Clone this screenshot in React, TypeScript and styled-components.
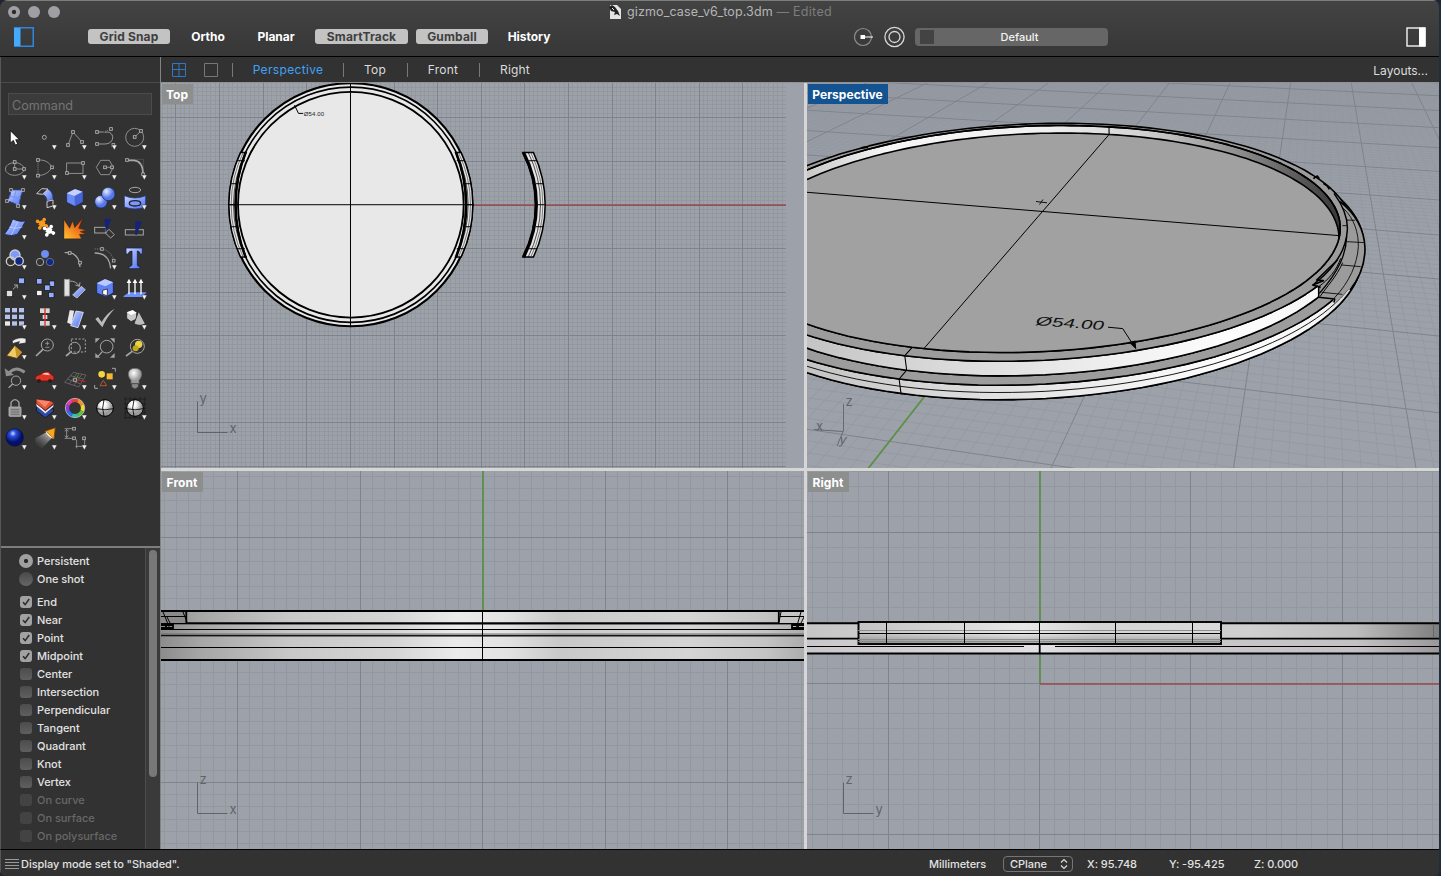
import React from 'react';
import styled, { createGlobalStyle } from 'styled-components';

const Global = createGlobalStyle`
  * { box-sizing: border-box; }
  body { margin: 0; background: #1b2536; font-family: Inter, "Liberation Sans", sans-serif; }
  svg { display: block; }
`;

/* ---------- window chrome ---------- */

const Window = styled.div`
  width: 1441px;
  height: 876px;
  display: flex;
  flex-direction: column;
  overflow: hidden;
  background: #323232;
  border-right: 2px solid #232c3b;
  border-radius: 8px 8px 6px 6px;
`;

const Header = styled.header`
  height: 57px;
  flex: none;
  border-top: 1px solid #7c7e7c;
  border-bottom: 1px solid #000;
  background: linear-gradient(#434343, #373737);
`;

const TitleRow = styled.div`
  height: 21px;
  display: grid;
  grid-template-columns: 608px auto 1fr;
  align-items: center;
`;

const Lights = styled.div`
  display: flex;
  gap: 8px;
  padding-left: 8px;
`;

const Light = styled.span<{ $dot?: boolean }>`
  width: 12px;
  height: 12px;
  border-radius: 50%;
  background: ${p => (p.$dot ? 'radial-gradient(circle, #2c2c2e 0 1.8px, #a09fa4 2.6px)' : '#a09fa4')};
`;

const Title = styled.div`
  display: flex;
  align-items: center;
  font-size: 12.5px;
  letter-spacing: 0.12px;
  color: #b5b5b5;
  white-space: pre;
  svg { margin-right: 5px; }
  span { color: #7d7d7d; letter-spacing: 0.3px; }
`;

const ToolRow = styled.div`
  height: 30px;
  display: flex;
  align-items: center;
  padding: 0 13px 0 14px;
`;

const Modes = styled.div`
  display: flex;
  margin: -1px 0 0 53px;
`;

const Mode = styled.button<{ $on?: boolean; $w: number; $ml?: number }>`
  width: ${p => p.$w}px;
  height: 15px;
  margin-left: ${p => p.$ml ?? 0}px;
  padding: 0;
  border: 0;
  border-radius: 3px;
  font: 700 12px/15px Inter, sans-serif;
  letter-spacing: ${p => (p.$on ? 0.15 : -0.02)}px;
  text-align: center;
  white-space: nowrap;
  color: ${p => (p.$on ? '#3f3f3f' : '#fff')};
  background: ${p => (p.$on ? '#c3c3c3' : 'transparent')};
`;

const LayerTools = styled.div`
  display: flex;
  align-items: center;
  gap: 10px;
  margin-left: 301px;
`;

const LayerSelect = styled.div`
  width: 193px;
  height: 18px;
  border-radius: 4px;
  display: flex;
  align-items: center;
  padding-left: 5px;
  background: #666;
  font-size: 11px;
  font-weight: 500;
  color: #f2f2f2;
  i { width: 14px; height: 14px; background: #434343; }
  span { flex: 1; text-align: center; padding-right: 3px; }
`;

const Push = styled.div`
  margin-left: auto;
`;

const Layouts = styled(Push)`
  padding-top: 2px;
`;

const Body = styled.div`
  flex: 1;
  min-height: 0;
  display: flex;
`;

/* ---------- sidebar ---------- */

const Sidebar = styled.aside`
  width: 160px;
  flex: none;
  display: flex;
  flex-direction: column;
  border-left: 1px solid #575757;
`;

const SideHead = styled.div`
  height: 26px;
  flex: none;
  border-bottom: 1px solid #4a4a4a;
`;

const Command = styled.div`
  height: 22px;
  flex: none;
  margin: 10px 8px 8px 7px;
  padding-left: 3px;
  border: 1px solid #4b4b4b;
  background: #3b3b3b;
  color: #747474;
  font-size: 12.6px;
  line-height: 23px;
  letter-spacing: 0;
`;

const Tools = styled.div`
  display: grid;
  grid-template-columns: repeat(5, 30px);
  grid-auto-rows: 30px;
  margin-left: -1px;
`;

const Osnap = styled.div`
  margin-top: auto;
  height: 303px;
  flex: none;
  display: flex;
  border-top: 2px solid #7d7d7d;
  overflow: hidden;
`;

const SnapList = styled.div`
  flex: 1;
  padding: 4px 0 0 19px;
`;

const Snap = styled.label<{ $dim?: boolean; $gap?: boolean }>`
  height: 18px;
  margin-top: ${p => (p.$gap ? 5 : 0)}px;
  display: flex;
  align-items: center;
  font-size: 11px;
  font-weight: 500;
  letter-spacing: -0.03px;
  color: ${p => (p.$dim ? '#686868' : '#e2e2e2')};
`;

const Box = styled.span<{ $on?: boolean; $dim?: boolean }>`
  width: 12px;
  height: 12px;
  margin-right: 5px;
  border-radius: 3px;
  display: flex;
  align-items: center;
  justify-content: center;
  background: ${p => (p.$on ? '#a2a2a2' : p.$dim ? '#434343' : 'linear-gradient(#4c4c4c, #5f5f5f)')};
`;

const Radio = styled.span<{ $on?: boolean }>`
  width: 14px;
  height: 14px;
  margin: 0 4px 0 -1px;
  border-radius: 50%;
  background: ${p =>
    p.$on ? 'radial-gradient(circle, #2a2a2a 0 1.7px, #a0a0a0 2.5px)' : 'linear-gradient(#4a4a4a, #666)'};
`;

const Track = styled.div`
  width: 15px;
  padding: 2px 3px;
  border-left: 1px solid #4c4c4c;
  background: #3a3a3a;
`;

const Thumb = styled.div`
  width: 8px;
  height: 227px;
  border-radius: 4px;
  background: #787878;
`;

/* ---------- viewport area ---------- */

const Main = styled.main`
  flex: 1;
  min-width: 0;
  display: flex;
  flex-direction: column;
  border-left: 1px solid #828282;
`;

const TabBar = styled.nav`
  height: 25px;
  flex: none;
  display: flex;
  align-items: center;
  padding: 0 11px;
  font-size: 12px;
  color: #dcdcdc;
`;

const Tab = styled.span<{ $w: number; $active?: boolean }>`
  width: ${p => p.$w}px;
  text-align: center;
  letter-spacing: ${p => (p.$active ? 0.33 : 0.2)}px;
  color: ${p => (p.$active ? '#3fa3f7' : '#dcdcdc')};
`;

const Sep = styled.i`
  width: 1px;
  height: 14px;
  background: #787878;
`;

const Views = styled.div`
  flex: 1;
  min-height: 0;
  display: grid;
  grid-template-columns: 643px 632px;
  grid-template-rows: 385px 378px;
  gap: 3px;
  background: #d6d6d6;
  border-top: 1px solid #8f9194;
`;

const View = styled.section`
  position: relative;
  overflow: hidden;
  background: #9da2aa;
`;

const ViewLabel = styled.span<{ $active?: boolean; $w: number }>`
  position: absolute;
  left: 1px;
  top: 1px;
  width: ${p => p.$w}px;
  height: 20px;
  padding-right: 1px;
  font-size: 12px;
  font-weight: 700;
  line-height: 21px;
  letter-spacing: 0.04px;
  text-align: center;
  color: #fff;
  background: ${p => (p.$active ? '#145391' : '#8d8e8e')};
`;

/* ---------- status bar ---------- */

const Status = styled.footer`
  height: 27px;
  flex: none;
  display: flex;
  align-items: center;
  border-top: 1px solid #000;
  border-left: 1px solid #575757;
  padding: 1px 0 0 4px;
  font-size: 11px;
  font-weight: 500;
  letter-spacing: -0.04px;
  color: #e2e2e2;
  white-space: nowrap;
`;

const StatusText = styled.span<{ $w: number }>`
  width: ${p => p.$w}px;
`;

const PlaneSelect = styled.span`
  width: 70px;
  height: 16px;
  margin-right: 14px;
  padding: 0 4px 0 6px;
  border: 1px solid #757575;
  border-radius: 4px;
  display: flex;
  align-items: center;
  justify-content: space-between;
`;

/* ---------- geometry helpers ---------- */

type P2 = [number, number];

const n1 = (v: number) => v.toFixed(1);
const toPath = (pts: P2[], close = false) =>
  'M' + pts.map(p => n1(p[0]) + ' ' + n1(p[1])).join('L') + (close ? 'Z' : '');

interface GridProps {
  x0: number; x1: number; y0: number; y1: number;
  ox: number; oy: number; step: number;
}

function OrthoGrid({ x0, x1, y0, y1, ox, oy, step }: GridProps) {
  let minor = '';
  let major = '';
  for (let i = Math.ceil((x0 - ox) / step); ox + i * step <= x1; i++) {
    const x = Math.floor(ox + i * step) + 0.5;
    const d = `M${x} ${y0}V${y1}`;
    if (i % 10 === 0) major += d; else minor += d;
  }
  for (let i = Math.ceil((y0 - oy) / step); oy + i * step <= y1; i++) {
    const y = Math.floor(oy + i * step) + 0.5;
    const d = `M${x0} ${y}H${x1}`;
    if (i % 10 === 0) major += d; else minor += d;
  }
  return (
    <g fill="none">
      <path d={minor} stroke="#93989f" />
      <path d={major} stroke="#7f848c" />
    </g>
  );
}

function AxisIcon({ x, y, h, v }: { x: number; y: number; h: string; v: string }) {
  return (
    <g fontFamily="Inter, sans-serif" fontSize="13" fill="#5f646a">
      <path d={`M${x} ${y - 31}V${y}H${x + 30}`} fill="none" stroke="#5f646a" />
      <text x={x + 2} y={y - 30}>{v}</text>
      <text x={x + 32} y={y}>{h}</text>
    </g>
  );
}

/* ---------- top viewport ---------- */

// seated: the clip lies inside the case ring, so its inner edge follows the ring
function Clip({ cx, seated }: { cx: number; seated?: boolean }) {
  const half = 157;
  const at = (r: number, t: number) => cx + Math.sqrt(r * r - t * t);
  const arc = (r: number) => `M${at(r, half)} ${373 - half}A${r} ${r} 0 0 1 ${at(r, half)} ${373 + half}`;
  const x0 = seated ? cx + 314 : cx + 299;
  const r0 = seated ? 420 : 340;
  const bars = [-132, -63, 0, 66, 132];
  return (
    <g fill="none" stroke="#000">
      <path d={`${arc(366)}H${x0}A${r0} ${r0} 0 0 0 ${x0} ${373 - half}Z`} fill="#e6e6e6" strokeWidth="4.5" />
      <path
        d={`M${x0 + 2} ${373 - half}A${r0} ${r0} 0 0 1 ${x0 + 2} ${373 + half}`}
        strokeWidth={seated ? 7 : 10}
      />
      <path d={arc(352)} strokeWidth="2" />
      <path d={arc(359)} strokeWidth="2" stroke="#444" />
      {bars.map(t => <path key={t} d={`M${at(344, t)} ${373 + t}H${at(366, t)}`} strokeWidth="3" />)}
    </g>
  );
}

function TopView() {
  return (
    <svg width="643" height="385" viewBox="161 83 643 385">
      <OrthoGrid x0={161} x1={786} y0={83} y1={468} ox={350.4} oy={204.8} step={4.36} />
      <path d="M350 205.2H786" stroke="#9a4b4d" strokeWidth="1.6" />
      <g transform="translate(160.5 80.4) scale(0.33333)" stroke="#000" fill="none">
        <circle cx="571" cy="373" r="364.5" fill="#e8e8e8" strokeWidth="6.5" />
        <circle cx="571" cy="373" r="353" strokeWidth="5" />
        <circle cx="571" cy="373" r="338.5" strokeWidth="5.5" />
        <Clip cx={571} seated />
        <g transform="translate(1142 0) scale(-1 1)"><Clip cx={571} seated /></g>
        <Clip cx={788} />
        <path d="M570 10V740M206 373H940" strokeWidth="3" />
        <path d="M402 74L414 99H428" strokeWidth="3" />
      </g>
      <text x="303.8" y="115.8" fontFamily="Liberation Sans, sans-serif" fontSize="6" letterSpacing="0.1" fill="#222">Ø54.00</text>
      <AxisIcon x={197.5} y={432.5} h="x" v="y" />
    </svg>
  );
}

/* ---------- perspective viewport ---------- */

const cam = { Fx: 802, Fy: 815, cx: 1123, horizon: -108.4, H: 28.8, D: 67.9, L: -7.27 };
const pitch = Math.atan2(384, 815);
const yaw = (12.47 * Math.PI) / 180;

// wx grows to the right of the picture, wy grows away from the viewer
const depth = (wx: number, wy: number, z: number) => {
  const D = cam.D + wy * Math.cos(yaw) - wx * Math.sin(yaw);
  return D * Math.cos(pitch) + (cam.H - z) * Math.sin(pitch);
};

const project = (wx: number, wy: number, z: number): P2 => {
  const L = cam.L + wx * Math.cos(yaw) + wy * Math.sin(yaw);
  const zc = depth(wx, wy, z);
  return [
    cam.cx + (cam.Fx * L) / zc,
    cam.horizon + (cam.Fy * (cam.H - z)) / (Math.cos(pitch) * zc),
  ];
};

const segment = (a: P2, b: P2) => {
  const near = 12;
  const da = depth(a[0], a[1], 0);
  const db = depth(b[0], b[1], 0);
  if (da < near && db < near) return '';
  const cut = (t: number): P2 => [a[0] + (b[0] - a[0]) * t, a[1] + (b[1] - a[1]) * t];
  const t = (near - da) / (db - da);
  const p = da < near ? cut(t) : a;
  const q = db < near ? cut(t) : b;
  return toPath([project(p[0], p[1], 0), project(q[0], q[1], 0)]);
};

const arcPts = (r: number, z: number, from = 0, to = 360): P2[] => {
  const out: P2[] = [];
  for (let a = from; a <= to; a += 2) {
    const t = (a * Math.PI) / 180;
    out.push(project(r * Math.cos(t), r * Math.sin(t), z));
  }
  return out;
};

const ring = (r: number, z: number) => toPath(arcPts(r, z), true);
const wall = (r: number, z0: number, z1: number) =>
  toPath([...arcPts(r, z0, 180, 360), ...arcPts(r, z1, 180, 360).reverse()], true);

function PerspectiveView() {
  let minor = '';
  let major = '';
  for (let i = -100; i <= 100; i++) {
    const d = segment([i, 100], [i, -100]) + segment([-100, i], [100, i]);
    if (i % 10 === 0) major += d; else minor += d;
  }
  const seam = toPath([
    project(0, -26, 4), project(0, -27, 4), project(0, -27, 3), project(0, -28, 3), project(0, -28, 2),
  ]);
  return (
    <svg width="632" height="385" viewBox="807 83 632 385">
      <defs>
        <linearGradient id="outer" gradientUnits="userSpaceOnUse" x1="807" y1="0" x2="1366" y2="0">
          <stop offset="0" stopColor="#c4c4c4" />
          <stop offset="0.2" stopColor="#d6d6d6" />
          <stop offset="0.5" stopColor="#ececec" />
          <stop offset="0.75" stopColor="#fdfdfd" />
          <stop offset="0.92" stopColor="#f6f6f6" />
          <stop offset="1" stopColor="#bbb" />
        </linearGradient>
        <linearGradient id="inner" gradientUnits="userSpaceOnUse" x1="807" y1="0" x2="1345" y2="0">
          <stop offset="0" stopColor="#c9c9c9" />
          <stop offset="0.15" stopColor="#f6f6f6" />
          <stop offset="0.45" stopColor="#f0f0f0" />
          <stop offset="0.62" stopColor="#d2d2d2" />
          <stop offset="0.8" stopColor="#8f8f8f" />
          <stop offset="1" stopColor="#333" />
        </linearGradient>
        <linearGradient id="haze" x1="0" y1="0" x2="0" y2="1">
          <stop offset="0" stopColor="#92979f" stopOpacity="0.7" />
          <stop offset="0.5" stopColor="#989da5" stopOpacity="0" />
        </linearGradient>
        <clipPath id="bowl"><path d={ring(26, 4)} /></clipPath>
      </defs>
      <path d={minor} fill="none" stroke="#92979f" strokeWidth="0.7" />
      <rect x="807" y="83" width="632" height="385" fill="url(#haze)" />
      <path d={major} fill="none" stroke="#7f848c" />
      <path d={segment([0, 0], [0, -100])} stroke="#5b9147" strokeWidth="1.8" fill="none" />

      <g stroke="#000" strokeWidth="1.6" strokeLinejoin="round">
        <path d={ring(28, 2)} fill="url(#outer)" />
        <path d={wall(28, 2, 3)} fill="url(#outer)" />
        <path d={toPath(arcPts(28, 2.5, 180, 360))} fill="none" strokeWidth="0.9" />
        <path d={ring(28, 3)} fill="#9c9c9c" />
        <path d={ring(27, 3)} fill="url(#outer)" />
        <path d={wall(27, 3, 4)} fill="url(#outer)" />
        <path d={ring(27, 4)} fill="#9c9c9c" />
        <path d={ring(26, 4)} fill="url(#inner)" />
        <g clipPath="url(#bowl)">
          <path d={ring(26, 3.1)} fill="#a1a1a1" />
          <path
            d={toPath([project(0, 26, 3.1), project(0, -27, 3.1)]) + toPath([project(-26, 0, 3.1), project(26, 0, 3.1)])}
            strokeWidth="1" fill="none"
          />
        </g>
        <path d={ring(26, 4)} fill="none" />
        <path d={seam} fill="none" strokeWidth="1.1" />
        <path d={toPath([project(0, 26, 3.1), project(0, 26, 4)])} strokeWidth="1.1" />
      </g>

      {/* notch with the side clip seated in it */}
      <g transform="translate(1110 80) scale(0.33333)" fill="none" stroke="#000" strokeWidth="4" strokeLinejoin="round">
        <path
          d="M690 365C735 400 763 445 765 505C764 570 735 620 672 668L668 657L626 652L626 618L612 612C660 570 700 520 709 450C710 420 704 392 690 365Z"
          fill="#9b9b9b" stroke="none"
        />
        <path d="M690 365C735 400 763 445 765 505C765 550 752 590 720 630" strokeWidth="5" />
        <path d="M700 385C733 415 746 460 745 500C742 550 720 605 672 655" strokeWidth="2.5" />
        <path d="M672 340C700 378 714 410 712 450C708 520 660 575 612 612" strokeWidth="4.5" />
        <path d="M710 470C708 520 690 570 628 640" strokeWidth="4" />
        <path d="M692 535C680 570 655 600 626 620" strokeWidth="3" />
        <path d="M698 548C680 590 650 620 630 650" strokeWidth="3" />
        <path d="M682 540L620 600L640 602L608 615L632 622" strokeWidth="5" />
        <path d="M697 437H710M710 485L765 488M695 555L752 560M635 637L697 643M708 420L735 421" strokeWidth="2.5" />
        <path d="M626 620V652L674 657L672 668" strokeWidth="4.5" />
        <path d="M610 296L622 288L628 296M640 310L652 318L658 328" strokeWidth="5" />
      </g>
      <path d="M861 148L868 147" stroke="#000" strokeWidth="2" />
      <path d="M1036 201.5L1047 202.8M1043 199.5L1039.5 204.5" stroke="#111" />

      <text
        transform="matrix(1.68 0.12 -0.36 1 1034.5 325)"
        fontFamily="Liberation Sans, sans-serif" fontSize="12.4" fill="#111"
      >Ø54.00</text>
      <path d="M1108 327.2L1122.7 328.6L1134 346" stroke="#000" fill="none" />
      <path d="M1128.5 342L1135.5 340.5L1136.3 349.5Z" />

      <g stroke="#666b71" fill="none">
        <path d="M843.5 404V431.5M814 429.5L843 431.5L837 446" />
      </g>
      <g fontFamily="Inter, sans-serif" fontSize="13" fill="#5f646a">
        <text x="845.5" y="405.5">z</text>
        <text x="816" y="430.5">x</text>
        <text transform="translate(838.5 444) skewX(-14)">y</text>
      </g>
    </svg>
  );
}

/* ---------- front and right viewports ---------- */

function FrontView() {
  return (
    <svg width="643" height="378" viewBox="161 471 643 378">
      <defs>
        <linearGradient id="band" x1="0" x2="1" y1="0" y2="0">
          <stop offset="0" stopColor="#8c8c8c" />
          <stop offset="0.06" stopColor="#a6a6a6" />
          <stop offset="0.2" stopColor="#c8c8c8" />
          <stop offset="0.36" stopColor="#d4d4d4" />
          <stop offset="0.46" stopColor="#ebebeb" />
          <stop offset="0.54" stopColor="#e2e2e2" />
          <stop offset="0.62" stopColor="#c9c9c9" />
          <stop offset="0.82" stopColor="#d5d5d5" />
          <stop offset="0.94" stopColor="#c4c4c4" />
          <stop offset="1" stopColor="#adadad" />
        </linearGradient>
      </defs>
      <OrthoGrid x0={161} x1={804} y0={471} y1={849} ox={482.6} oy={659.8} step={12.25} />
      <path d="M483 471V611" stroke="#5b9147" strokeWidth="1.8" />
      <rect x="161" y="611" width="643" height="49" fill="url(#band)" />
      <g stroke="#000" fill="none">
        <path d="M161 611H804" strokeWidth="2" />
        <path d="M161 623.2H804" strokeWidth="1.8" />
        <path d="M161 624.5H804M161 634H804M161 636.5H804" stroke="#666" strokeWidth="0.9" />
        <path d="M161 629.5H804M161 635.4H804M161 647.5H804" />
        <path d="M161 660H804" strokeWidth="2" />
        <path d="M482.5 611V660" />
        <rect x="161" y="612" width="26" height="11" fill="#8a8a8a" stroke="none" />
        <path d="M186.3 611V623" strokeWidth="1.8" />
        <path d="M161 616.5H187M163 612L170 629M167 617L170 623M183 612L187 622" />
        <path d="M161 625H173V628H161M166 624V629" strokeWidth="1.8" />
        <rect x="779" y="612" width="25" height="11" fill="#c4c4c4" stroke="none" />
        <path d="M778.8 611V623" strokeWidth="1.8" />
        <path d="M780 616.5H804M781 612L779 622M801 612L796 629M804 617L801 623" />
        <path d="M804 625H792V628H804M798 624V629" strokeWidth="1.8" />
      </g>
      <AxisIcon x={197.5} y={813.5} h="x" v="z" />
    </svg>
  );
}

function RightView() {
  return (
    <svg width="632" height="378" viewBox="807 471 632 378">
      <defs>
        <linearGradient id="strip" x1="0" x2="1" y1="0" y2="0">
          <stop offset="0" stopColor="#c6c6c6" />
          <stop offset="0.28" stopColor="#d6d6d6" />
          <stop offset="0.37" stopColor="#e8e8e8" />
          <stop offset="0.48" stopColor="#cdcdcd" />
          <stop offset="0.7" stopColor="#d0d0d0" />
          <stop offset="0.87" stopColor="#bcbcbc" />
          <stop offset="1" stopColor="#7f7f7f" />
        </linearGradient>
        <linearGradient id="base" x1="0" x2="1" y1="0" y2="0">
          <stop offset="0" stopColor="#cac7ca" />
          <stop offset="0.37" stopColor="#e2e0e2" />
          <stop offset="0.5" stopColor="#cdcacd" />
          <stop offset="0.87" stopColor="#c3c1c3" />
          <stop offset="1" stopColor="#9a989a" />
        </linearGradient>
        <linearGradient id="clip" x1="0" x2="1" y1="0" y2="0">
          <stop offset="0" stopColor="#c4c4c4" />
          <stop offset="0.25" stopColor="#d6d6d6" />
          <stop offset="0.45" stopColor="#e8e8e8" />
          <stop offset="0.65" stopColor="#d4d4d4" />
          <stop offset="1" stopColor="#dadada" />
        </linearGradient>
        <linearGradient id="clipShade" x1="0" x2="0" y1="0" y2="1">
          <stop offset="0.5" stopColor="#000" stopOpacity="0" />
          <stop offset="1" stopColor="#000" stopOpacity="0.28" />
        </linearGradient>
      </defs>
      <OrthoGrid x0={807} x1={1439} y0={471} y1={849} ox={1039.6} oy={683.4} step={15.13} />
      <path d="M1040 471V684" stroke="#5b9147" strokeWidth="1.8" />
      <path d="M1040 684H1439" stroke="#984a4c" strokeWidth="1.6" />
      <rect x="807" y="623" width="632" height="15" fill="url(#strip)" />
      <rect x="807" y="638" width="632" height="16" fill="url(#base)" />
      <g stroke="#000" fill="none">
        <path d="M807 623.2H1439M807 638.6H1439M807 653.5H1439" strokeWidth="1.9" />
        <path d="M807 646.5H1439" />
        <path d="M1024 646.5H1055" stroke="#e4e0e4" />
        <path d="M1433.5 624V638" stroke="#666" />
        <path d="M1039.7 644V654" strokeWidth="1.8" />
        <rect x="858.5" y="622" width="362.5" height="22" fill="url(#clip)" stroke="none" />
        <rect x="858.5" y="622" width="362.5" height="22" fill="url(#clipShade)" strokeWidth="1.9" />
        <path d="M858 630.5H1221M858 639.5H1221M858 641.5H1221" stroke="#888" strokeWidth="0.9" />
        <path d="M858 633.5H1221M886.5 622V644M964.5 622V644M1039.5 622V644M1115.5 622V644M1192.5 622V644" />
      </g>
      <AxisIcon x={843.5} y={813.5} h="y" v="z" />
    </svg>
  );
}

/* ---------- tool icons, each on a 90 unit square ---------- */

const ink = '#a5a5a5';
const Sq = ({ x, y, s = 8 }: { x: number; y: number; s?: number }) => (
  <rect x={x - s / 2} y={y - s / 2} width={s} height={s} fill="#323232" stroke="#b4b4b4" strokeWidth="2.6" />
);
const Ball = ({ x, y, r, f = 'url(#ball)' }: { x: number; y: number; r: number; f?: string }) => (
  <circle cx={x} cy={y} r={r} fill={f} stroke="#16224d" strokeWidth="2" />
);
const Tile = ({ x, y, s = 14, f = '#93adff' }: { x: number; y: number; s?: number; f?: string }) => (
  <rect x={x} y={y} width={s} height={s} fill={f} stroke="#111" strokeWidth="2" />
);
const Lens = ({ x, y, r }: { x: number; y: number; r: number }) => (
  <g>
    <circle cx={x} cy={y} r={r} strokeWidth="3" />
    <path d={`M${x - r * 0.72} ${y + r * 0.72}L18 69`} strokeWidth="5" />
  </g>
);
const Puzzle = ({ x, y, fill }: { x: number; y: number; fill: string }) => (
  <g transform={`translate(${x} ${y}) rotate(28)`} fill={fill} stroke="none">
    <path d="M-15 0H15M0-14V14" stroke="#1c1c1c" strokeWidth="11" strokeLinecap="round" />
    <path d="M-14 0H14M0-13V13" stroke={fill} strokeWidth="7" />
    <rect x="-8" y="-8" width="16" height="16" />
    <circle cx="-15" cy="0" r="5.5" />
    <circle cx="15" cy="0" r="5.5" />
    <circle cx="0" cy="-14" r="5.5" />
    <circle cx="0" cy="14" r="5.5" />
  </g>
);

type Tool = { art: React.ReactNode; menu?: boolean };

const tools: Tool[] = [
  { art: <path d="M31 23V60L40 52L46 66L53 63L47 50H58Z" fill="#fff" stroke="#000" strokeWidth="2" /> },
  { art: <circle cx="43" cy="43" r="6" strokeWidth="3" />, menu: true },
  { art: <><path d="M24 66L39 27L66 57" /><Sq x={24} y={66} /><Sq x={39} y={27} /><Sq x={66} y={57} /></>, menu: true },
  { art: <><path d="M25 27H40M44 28C74 20 78 63 44 63H25" strokeWidth="2.8" /><path d="M40 27L62 19" strokeDasharray="3 3" strokeWidth="2" /><Sq x={21} y={27} /><Sq x={63} y={18} /><Sq x={21} y={63} /><Sq x={70} y={66} /></>, menu: true },
  { art: <><circle cx="44" cy="43" r="27" /><path d="M44 42L63 24" /><Sq x={44} y={42} /><Sq x={63} y={24} /></>, menu: true },

  { art: <><ellipse cx="44" cy="48" rx="28" ry="19" /><path d="M44 27V48H72" /><Sq x={44} y={27} /><Sq x={44} y={48} /><Sq x={72} y={48} /></>, menu: true },
  { art: <><path d="M24 21C45 20 58 28 66 43C56 60 44 66 24 68" /><path d="M24 25V64" strokeDasharray="3 3" /><Sq x={24} y={21} /><Sq x={66} y={43} /><Sq x={24} y={68} /></>, menu: true },
  { art: <><rect x="20" y="30" width="49" height="31" /><Sq x={69} y={30} /><Sq x={21} y={60} /></>, menu: true },
  { art: <><path d="M19 43L32 22H58L70 43L58 65H32Z" /><path d="M45 43H66" /><Sq x={45} y={43} /><Sq x={66} y={43} /></>, menu: true },
  { art: <><path d="M25 19H70V62" strokeWidth="1.5" stroke="#666" /><path d="M25 22H42Q68 24 69 62" strokeWidth="5" /><Sq x={21} y={21} /><Sq x={69} y={64} /></>, menu: true },

  { art: <><path d="M33 21H69Q60 40 57 69Q38 56 21 54Q32 42 33 21Z" fill="url(#blue)" stroke="#2c4ba8" /><path d="M27 39L62 46M48 22L40 58" stroke="#6f8cf0" /><Sq x={33} y={21} /><Sq x={69} y={21} /><Sq x={21} y={54} /><Sq x={54} y={69} /></>, menu: true },
  { art: <><path d="M36 34L54 18Q70 26 69 50L51 54Q50 38 36 34Z" fill="url(#blue)" stroke="#23388a" /><path d="M20 32L35 17L54 18L37 34Z" fill="#323232" strokeWidth="3" stroke="#ccc" /><path d="M51 55L69 51V69L51 74Z" fill="#323232" strokeWidth="3" stroke="#ccc" /></>, menu: true },
  { art: <><path d="M20 31L45 18L68 26V56L44 70L20 58Z" fill="#6c8cf5" stroke="#1b2a60" /><path d="M20 31L45 18L68 26L44 39Z" fill="#c3d1ff" stroke="none" /><path d="M44 39L68 26V56L44 70Z" fill="#4666d6" stroke="none" /></>, menu: true },
  { art: <><Ball x={33} y={56} r={19} /><Ball x={55} y={33} r={20} /></>, menu: true },
  { art: <><ellipse cx="45" cy="21" rx="17" ry="8" strokeWidth="3" /><path d="M13 38Q45 52 77 38V72Q45 84 13 72Z" fill="url(#blue)" stroke="#23388a" /><ellipse cx="45" cy="61" rx="17" ry="8" stroke="#222" strokeWidth="4" fill="#7a98ff" /></>, menu: true },

  { art: <><path d="M38 18Q56 28 77 24Q68 40 52 64Q34 72 13 64Q30 44 38 18Z" fill="url(#blue)" stroke="#16224d" /><path d="M27 42Q46 50 68 42M54 25L34 66" stroke="#dfe7ff" strokeWidth="1.6" /></>, menu: true },
  { art: <><Puzzle x={36} y={32} fill="#f79a1f" /><Puzzle x={57} y={53} fill="#fff" /></> },
  { art: <path d="M12 20L29 46L38 24L44 44L68 16L56 46L78 52L60 56L78 63L58 64L64 77H12Z" fill="url(#fire)" stroke="#3a1408" strokeWidth="1" /> },
  { art: <><rect x="14" y="43" width="34" height="17" strokeWidth="3" /><path d="M46 60L57 49L73 65L62 75Z" strokeWidth="3" /><path d="M43 18H64L48 58Z" fill="#14227c" stroke="none" /></> },
  { art: <><rect x="16" y="50" width="54" height="16" strokeWidth="3" /><path d="M46 25H66L50 66H46Z" fill="#14227c" stroke="none" /></> },

  { art: <><circle cx="45" cy="36" r="15" fill="#7d9bff" stroke="#ccc" strokeWidth="4" /><circle cx="32" cy="55" r="13" stroke="#ccc" strokeWidth="4" /><circle cx="57" cy="54" r="13" fill="#16277f" stroke="#ccc" strokeWidth="4" /></>, menu: true },
  { art: <><circle cx="45" cy="33" r="11" fill="#6c8ef8" stroke="#8090c8" strokeWidth="2" /><circle cx="30" cy="57" r="11" strokeWidth="3" /><circle cx="60" cy="57" r="11" fill="#16277f" stroke="#6e7dae" /></> },
  { art: <><path d="M14 29H30Q58 36 60 72" strokeWidth="4" /><Sq x={29} y={30} /><Sq x={60} y={59} /></> },
  { art: <><path d="M14 30Q58 30 62 76" strokeWidth="4" /><path d="M14 18H30M44 19L60 30L70 46" strokeDasharray="3 4" /><Sq x={36} y={18} /><Sq x={71} y={53} /></>, menu: true },
  { art: <path d="M18 15H67V33H60Q59 24 52 24V66Q52 70 60 71V77H27V71Q36 70 36 66V24Q26 24 25 33H18Z" fill="url(#blue)" stroke="#16224d" /> },

  { art: <><Tile x={56} y={15} s={17} /><Tile x={19} y={52} s={19} f="#ddd" /><path d="M38 50L52 36M52 36H42M52 36V46" strokeWidth="3" /></>, menu: true },
  { art: <><Tile x={20} y={17} s={16} /><Tile x={58} y={24} s={16} /><Tile x={44} y={36} s={16} /><Tile x={20} y={52} s={16} f="#f2f2f2" /><Tile x={56} y={58} s={16} /></> },
  { art: <><rect x="13" y="19" width="15" height="50" fill="#e0e0e0" stroke="#999" /><path d="M38 66L64 40L76 50L51 75Z" fill="url(#blue)" stroke="#ccc" /><path d="M28 24Q50 24 58 40M58 40L60 28M58 40L46 36" strokeWidth="3" /></> },
  { art: <><path d="M20 31L45 18L70 28V60L48 72L20 60Z" fill="#5e80f2" stroke="#14224f" strokeWidth="2.5" /><path d="M20 31L45 18L70 28L46 40Z" fill="#b9caff" stroke="none" /><path d="M38 52L52 48V68L38 64Z" fill="#fff" stroke="#222" /></>, menu: true },
  { art: <><path d="M12 68L28 58H80L66 72H10Z" fill="#6f90ff" stroke="none" /><path d="M27 64V24M45 64V24M63 64V24" stroke="#fff" strokeWidth="4" /><path d="M20 30L27 17L34 30ZM38 30L45 17L52 30ZM56 30L63 17L70 30Z" fill="#fff" stroke="none" /></>, menu: true },

  { art: <>{[0, 1, 2].map(i => [0, 1, 2].map(j => <rect key={`${i}${j}`} x={15 + i * 21} y={15 + j * 20} width="15" height="13" fill={i === 0 && j === 2 ? '#e8e8e8' : '#b4c1ec'} stroke="none" />))}</>, menu: true },
  { art: <><rect x="30" y="16" width="29" height="14" fill="#d8d8d8" stroke="none" /><rect x="38" y="36" width="14" height="12" fill="#d8d8d8" stroke="none" /><rect x="30" y="54" width="29" height="14" fill="#d8d8d8" stroke="none" /><path d="M45 14V72" stroke="#dc2d2d" strokeWidth="4" /></>, menu: true },
  { art: <><path d="M20 60L28 20L44 22L36 66Z" fill="#e8e8e8" stroke="#222" /><path d="M32 68L48 24L70 28L54 74Z" fill="url(#blue)" stroke="#eee" /></>, menu: true },
  { art: <path d="M16 48L24 42L35 57Q50 30 74 17Q50 42 37 73Z" fill="#b9b9b9" stroke="none" />, menu: true },
  { art: <><path d="M20 28L38 21L50 29V48L33 56L20 46Z" fill="#c9c9c9" stroke="#222" /><path d="M20 28L38 21L50 29L34 36Z" fill="#fff" stroke="none" /><path d="M56 25L76 62Q60 72 42 62Z" fill="#bdbdbd" stroke="#222" /></>, menu: true },

  { art: <><path d="M20 68L44 38L66 58L50 76Z" fill="#f0cb6a" stroke="#5a4108" /><path d="M44 38L66 58L50 76Z" fill="#c9952a" stroke="none" /><path d="M36 24Q54 10 78 16V30L54 34L58 26L38 32Z" fill="#ececec" stroke="#222" /></>, menu: true },
  { art: <><Lens x={52} y={36} r={18} /><path d="M46 31H58M52 25V37M46 43H58" /></> },
  { art: <><path d="M34 18H76V57H34Z" strokeDasharray="6 5" strokeWidth="3" /><Lens x={44} y={45} r={17} /></> },
  { art: <><circle cx="50" cy="41" r="19" strokeWidth="3" /><path d="M37 56L24 70" strokeWidth="4" /><path d="M16 16H30L16 30ZM74 16H60L74 30ZM16 74H30L16 60ZM74 74H60L74 60Z" fill={ink} stroke="none" /></> },
  { art: <><Lens x={52} y={40} r={21} /><circle cx="56" cy="34" r="11" fill="#e8d445" stroke="none" /><circle cx="47" cy="46" r="9" fill="#c2ab1f" stroke="none" /></> },

  { art: <><path d="M24 34Q44 6 74 28" strokeWidth="9" stroke="#8d8d8d" /><path d="M14 16L18 40L42 36Z" fill="#8d8d8d" stroke="none" /><circle cx="48" cy="53" r="14" strokeWidth="3" /><path d="M38 63L26 74" strokeWidth="4" /></>, menu: true },
  { art: <><path d="M15 46Q18 36 32 34Q40 24 56 26L66 36Q74 38 72 50L62 54H22Z" fill="#de3426" stroke="#6a0e08" /><path d="M36 34Q42 28 54 30L60 37Z" fill="#f6c9c4" stroke="none" /><circle cx="27" cy="54" r="6" fill="#222" stroke="none" /><circle cx="60" cy="54" r="6" fill="#222" stroke="none" /></>, menu: true },
  { art: <><path d="M14 58L40 28L78 36L56 72ZM22 48L60 62M30 38L70 48M28 62L52 30M42 66L66 34" stroke="#777" strokeWidth="2" /><path d="M48 50L76 56" stroke="#c02020" strokeWidth="4" /><path d="M48 50L56 34" stroke="#2f9a2f" strokeWidth="3" /><Sq x={45} y={51} /></>, menu: true },
  { art: <><circle cx="35" cy="34" r="10" fill="#f7d53c" stroke="none" /><rect x="50" y="31" width="18" height="18" fill="#f7b731" stroke="none" /><path d="M40 52L50 68H30Z" stroke="#b0572c" strokeWidth="3" /><path d="M66 16H76V26M14 66V76H24" strokeWidth="3" /></>, menu: true },
  { art: <><path d="M45 16C68 16 70 38 57 52V62H33V52C20 38 22 16 45 16Z" fill="url(#bulb)" stroke="#666" /><path d="M35 62H55V72L45 78L35 72Z" fill="#888" stroke="#444" /></>, menu: true },

  { art: <><path d="M33 44V28Q45 12 57 28V44" strokeWidth="4" /><rect x="27" y="42" width="36" height="28" rx="2" fill="#999" stroke="#bbb" /><path d="M33 50H58M33 57H58M33 64H58" stroke="#666" /></>, menu: true },
  { art: <><path d="M19 38L46 60L70 44V56L46 74L20 54Z" fill="#2a49b8" stroke="#111" /><path d="M18 30L46 54L72 34L70 42L46 62L19 40Z" fill="#f4f4f4" stroke="#333" strokeWidth="1.5" /><path d="M18 18L62 24L72 30L46 52L19 32Z" fill="#e2553c" stroke="#511" strokeWidth="1.5" /><path d="M20 20L60 25L45 42Z" fill="#f4886c" stroke="none" /></>, menu: true },
  { art: <g strokeWidth="11">{([['#ec3f32', 0], ['#f2902c', 45], ['#ecd934', 90], ['#59c33a', 135], ['#31bfae', 180], ['#2f6df0', 225], ['#8e3be0', 270], ['#e23cae', 315]] as [string, number][]).map(([c, a]) => <path key={a} d="M-9-21.5A23 23 0 0 1 9-21.5" stroke={c} transform={`translate(45 45) rotate(${a})`} />)}<circle cx="45" cy="45" r="29" stroke="#ddd" strokeWidth="2" /></g>, menu: true },
  { art: <><circle cx="45" cy="45" r="25" fill="url(#pearl)" stroke="#000" strokeWidth="3" /><path d="M20 47Q45 54 70 47M42 20Q34 45 42 70" stroke="#000" strokeWidth="2.5" /></> },
  { art: <><path d="M12 18H78M12 32H78M12 46H78M12 60H78M12 74H78M16 12V78M30 12V78M45 12V78M60 12V78M74 12V78" stroke="#161616" strokeWidth="1.6" /><circle cx="45" cy="45" r="25" fill="url(#pearl)" stroke="#000" strokeWidth="3" /><path d="M20 47Q45 54 70 47M42 20Q34 45 42 70" stroke="#000" strokeWidth="2.5" /></>, menu: true },

  { art: <circle cx="44" cy="43" r="26" fill="url(#marble)" stroke="#000a40" strokeWidth="2" />, menu: true },
  { art: <><path d="M52 26L16 46Q12 72 36 76L66 44Z" fill="url(#beam)" stroke="none" /><path d="M46 24L76 14L72 48Z" fill="#f5a623" stroke="#7a3a00" strokeWidth="2.5" /><path d="M46 24L72 48Q52 42 46 24Z" fill="#fff1b8" stroke="none" /></>, menu: true },
  { art: <><path d="M14 17H38M14 46H38M20 20V43M50 50V76M74 50V76M46 70H76M15 25L20 19L25 25M15 38L20 44L25 38" /><Sq x={42} y={17} /><Sq x={42} y={46} /><Sq x={72} y={46} /></>, menu: true },
];

const ToolSvg = styled.svg`
  width: 30px;
  height: 30px;
`;

const ToolIcon = ({ art, menu }: Tool) => (
  <ToolSvg viewBox="0 0 90 90" fill="none" stroke={ink} strokeWidth="2.4">
    {art}
    {menu && <path d="M65 66H81L73 81Z" fill="#f4f4f4" stroke="#323232" strokeWidth="1.5" />}
  </ToolSvg>
);

const Paints = () => (
  <svg width="0" height="0" viewBox="0 0 1 1">
    <defs>
      <linearGradient id="blue" x1="0" y1="0" x2="1" y2="1"><stop offset="0" stopColor="#cad7ff" /><stop offset="1" stopColor="#4a6cf0" /></linearGradient>
      <linearGradient id="fire" x1="0" y1="1" x2="1" y2="0"><stop offset="0" stopColor="#ffc531" /><stop offset="1" stopColor="#e02a0a" /></linearGradient>
      <radialGradient id="ball" cx="0.35" cy="0.3"><stop offset="0" stopColor="#e6edff" /><stop offset="1" stopColor="#5476ea" /></radialGradient>
      <radialGradient id="pearl" cx="0.4" cy="0.3"><stop offset="0.3" stopColor="#fff" /><stop offset="1" stopColor="#9a9a9a" /></radialGradient>
      <radialGradient id="marble" cx="0.4" cy="0.28"><stop offset="0" stopColor="#d0dcff" /><stop offset="0.35" stopColor="#2b50e0" /><stop offset="1" stopColor="#06106a" /></radialGradient>
      <radialGradient id="bulb" cx="0.4" cy="0.3"><stop offset="0" stopColor="#fff" /><stop offset="1" stopColor="#9a9a9a" /></radialGradient>
      <linearGradient id="beam" x1="1" y1="0" x2="0.2" y2="1"><stop offset="0" stopColor="#ddd" /><stop offset="1" stopColor="#777" stopOpacity="0" /></linearGradient>
    </defs>
  </svg>
);

const snaps: [string, 'on' | 'off' | 'dim'][] = [
  ['End', 'on'], ['Near', 'on'], ['Point', 'on'], ['Midpoint', 'on'],
  ['Center', 'off'], ['Intersection', 'off'], ['Perpendicular', 'off'], ['Tangent', 'off'],
  ['Quadrant', 'off'], ['Knot', 'off'], ['Vertex', 'off'],
  ['On curve', 'dim'], ['On surface', 'dim'], ['On polysurface', 'dim'],
];

export default function App() {
  return (
    <Window>
      <Global />
      <Header>
        <TitleRow>
          <Lights><Light $dot /><Light /><Light /></Lights>
          <Title>
            <svg width="14" height="16" viewBox="0 0 14 16">
              <path d="M2 1H9L13 5V15H2Z" fill="#e4e4e4" />
              <path d="M1 3L4 1L7 3L10 7L12 12L9 10L6 11L7 8L3 7Z" fill="#222" />
              <path d="M4 4L6 6M9 5L11 6" stroke="#eee" />
            </svg>
            gizmo_case_v6_top.3dm <span>— Edited</span>
          </Title>
        </TitleRow>
        <ToolRow>
          <svg width="21" height="20" viewBox="0 0 21 20">
            <rect x="0.75" y="0.75" width="18.5" height="18.5" fill="none" stroke="#2f86e0" strokeWidth="1.5" />
            <rect x="0" y="1" width="6.5" height="18" fill="#45a9fb" />
          </svg>
          <Modes>
            <Mode $on $w={82}>Grid Snap</Mode>
            <Mode $w={38} $ml={19}>Ortho</Mode>
            <Mode $w={42} $ml={28}>Planar</Mode>
            <Mode $on $w={93} $ml={18}>SmartTrack</Mode>
            <Mode $on $w={72} $ml={8}>Gumball</Mode>
            <Mode $w={48} $ml={17}>History</Mode>
          </Modes>
          <LayerTools>
            <svg width="20" height="20" viewBox="0 0 20 20">
              <circle cx="9" cy="10" r="8.5" fill="none" stroke="#8c8c8c" strokeWidth="1.2" />
              <rect x="6.5" y="8" width="4.5" height="4" fill="#fff" />
              <path d="M10 10H19" stroke="#fff" />
            </svg>
            <svg width="21" height="22" viewBox="0 0 21 22">
              <circle cx="10.5" cy="11" r="9.6" fill="none" stroke="#d8d8d8" strokeWidth="1.3" />
              <circle cx="10.5" cy="11" r="5.5" fill="none" stroke="#d8d8d8" strokeWidth="1.3" />
            </svg>
            <LayerSelect><i /><span>Default</span></LayerSelect>
          </LayerTools>
          <Push>
            <svg width="20" height="20" viewBox="0 0 20 20">
              <rect x="1" y="1" width="18" height="18" fill="none" stroke="#f4f4f4" strokeWidth="1.4" />
              <rect x="13" y="0.5" width="6.5" height="19" fill="#fff" />
            </svg>
          </Push>
        </ToolRow>
      </Header>
      <Body>
        <Sidebar>
          <SideHead />
          <Command>Command</Command>
          <Paints />
          <Tools>{tools.map((t, i) => <ToolIcon key={i} {...t} />)}</Tools>
          <Osnap>
            <SnapList>
              <Snap><Radio $on />Persistent</Snap>
              <Snap><Radio />One shot</Snap>
              {snaps.map(([name, state], i) => (
                <Snap key={name} $dim={state === 'dim'} $gap={i === 0}>
                  <Box $on={state === 'on'} $dim={state === 'dim'}>
                    {state === 'on' && (
                      <svg width="10" height="10" viewBox="0 0 10 10">
                        <path d="M2 5.2L4.2 7.6L8.2 2" fill="none" stroke="#2b2b2b" strokeWidth="1.5" />
                      </svg>
                    )}
                  </Box>
                  {name}
                </Snap>
              ))}
            </SnapList>
            <Track><Thumb /></Track>
          </Osnap>
        </Sidebar>
        <Main>
          <TabBar>
            <svg width="46" height="14" viewBox="0 0 46 14">
              <path d="M0.5 0.5H13.5V13.5H0.5ZM7 0V14M0 6.5H14" fill="none" stroke="#2d79c8" />
              <path d="M32.5 0.5H45.5V13.5H32.5Z" fill="none" stroke="#777" />
            </svg>
            <Sep style={{ marginLeft: 14 }} />
            <Tab $w={110} $active>Perspective</Tab><Sep />
            <Tab $w={62}>Top</Tab><Sep style={{ marginLeft: 1 }} />
            <Tab $w={70}>Front</Tab><Sep style={{ marginLeft: 1 }} />
            <Tab $w={70}>Right</Tab>
            <Layouts>Layouts...</Layouts>
          </TabBar>
          <Views>
            <View><TopView /><ViewLabel $w={31}>Top</ViewLabel></View>
            <View><PerspectiveView /><ViewLabel $w={80} $active>Perspective</ViewLabel></View>
            <View><FrontView /><ViewLabel $w={41}>Front</ViewLabel></View>
            <View><RightView /><ViewLabel $w={41}>Right</ViewLabel></View>
          </Views>
        </Main>
      </Body>
      <Status>
        <svg width="16" height="12" viewBox="0 0 16 12">
          <path d="M0 1.5H14M0 4.5H14M0 7.5H14M0 10.5H14" stroke="#9a9a9a" />
        </svg>
        <StatusText $w={908}>Display mode set to "Shaded".</StatusText>
        <StatusText $w={74}>Millimeters</StatusText>
        <PlaneSelect>
          CPlane
          <svg width="8" height="12" viewBox="0 0 8 12">
            <path d="M1 4.5L4 1.5L7 4.5M1 7.5L4 10.5L7 7.5" fill="none" stroke="#ddd" strokeWidth="1.2" />
          </svg>
        </PlaneSelect>
        <StatusText $w={82}>X: 95.748</StatusText>
        <StatusText $w={85}>Y: -95.425</StatusText>
        <StatusText $w={60}>Z: 0.000</StatusText>
      </Status>
    </Window>
  );
}
